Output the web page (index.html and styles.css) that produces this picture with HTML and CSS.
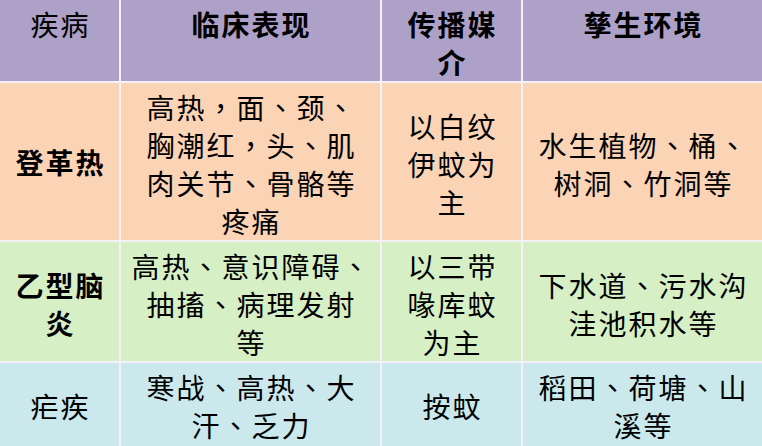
FILE: index.html
```html
<!DOCTYPE html>
<html lang="zh-CN">
<head>
<meta charset="utf-8">
<title>蚊媒传染病</title>
<link rel="stylesheet" href="styles.css">
</head>
<body>
<div class="table">
  <div class="cell head"><div class="t">疾病</div></div>
  <div class="cell head bold"><div class="t">临床表现</div></div>
  <div class="cell head bold"><div class="t">传播媒<br>介</div></div>
  <div class="cell head bold"><div class="t">孳生环境</div></div>

  <div class="cell peach bold"><div class="t">登革热</div></div>
  <div class="cell peach shift"><div class="t">高热<span class="p" lang="zh-TW">，</span>面<span class="p" lang="zh-TW">、</span>颈<span class="p" lang="zh-TW">、</span><br>胸潮红<span class="p" lang="zh-TW">，</span>头<span class="p" lang="zh-TW">、</span>肌<br>肉关节<span class="p" lang="zh-TW">、</span>骨骼等<br>疼痛</div></div>
  <div class="cell peach shift"><div class="t">以白纹<br>伊蚊为<br>主</div></div>
  <div class="cell peach shift"><div class="t">水生植物<span class="p" lang="zh-TW">、</span>桶<span class="p" lang="zh-TW">、</span><br>树洞<span class="p" lang="zh-TW">、</span>竹洞等</div></div>

  <div class="cell green bold shift"><div class="t">乙型脑<br>炎</div></div>
  <div class="cell green shift"><div class="t">高热<span class="p" lang="zh-TW">、</span>意识障碍<span class="p" lang="zh-TW">、</span><br>抽搐<span class="p" lang="zh-TW">、</span>病理发射<br>等</div></div>
  <div class="cell green shift"><div class="t">以三带<br>喙库蚊<br>为主</div></div>
  <div class="cell green shift"><div class="t">下水道<span class="p" lang="zh-TW">、</span>污水沟<br>洼池积水等</div></div>

  <div class="cell cyan"><div class="t">疟疾</div></div>
  <div class="cell cyan"><div class="t">寒战<span class="p" lang="zh-TW">、</span>高热<span class="p" lang="zh-TW">、</span>大<br>汗<span class="p" lang="zh-TW">、</span>乏力</div></div>
  <div class="cell cyan"><div class="t">按蚊</div></div>
  <div class="cell cyan"><div class="t">稻田<span class="p" lang="zh-TW">、</span>荷塘<span class="p" lang="zh-TW">、</span>山<br>溪等</div></div>
</div>
</body>
</html>
```

FILE: styles.css
```css
html, body {
  margin: 0;
  padding: 0;
  background: #ffffff;
  overflow: hidden;
}

body {
  width: 762px;
  height: 446px;
  font-family: "Noto Sans CJK SC", "Noto Sans", sans-serif;
  color: #000000;
}

.table {
  display: grid;
  grid-template-columns: 119px 259px 139px 239px;
  grid-template-rows: 81px 157px 119px 86px;
  gap: 2px;
  background: #f4f2f8;
}

.cell {
  display: flex;
  align-items: center;
  justify-content: center;
  font-size: 28px;
  line-height: 38px;
  letter-spacing: 2px;
  padding-left: 2px;
  font-weight: 400;
}

.t {
  text-align: center;
  white-space: nowrap;
  text-spacing-trim: space-all;
}

.p {
  font-family: "Noto Sans CJK TC", "Noto Sans CJK SC", sans-serif;
}

.bold {
  font-weight: 700;
}

.head {
  background: #ada1c8;
  align-items: flex-start;
  padding-top: 5px;
}

.peach {
  background: #fbd3b5;
}

.green {
  background: #d6efc4;
}

.cyan {
  background: #cbe9ec;
}

.shift {
  padding-top: 5px;
}
```
